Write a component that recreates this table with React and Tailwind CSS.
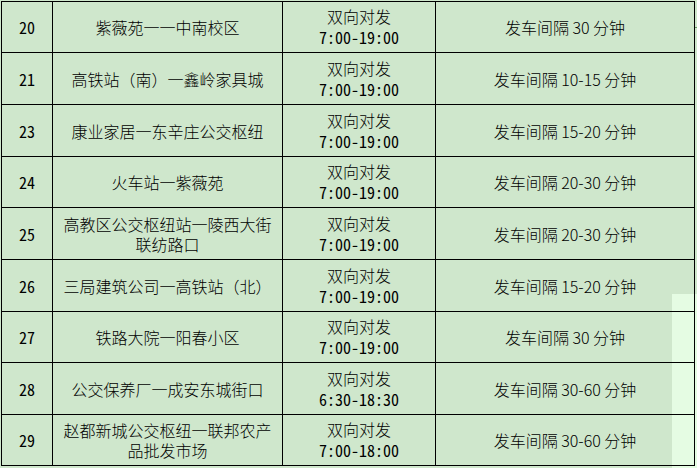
import React from "react";

const rows = [
  { no: "20", name: ["紫薇苑一一中南校区"], time: "7:00-19:00", gap: "发车间隔 30 分钟", h: "h-[51px]" },
  { no: "21", name: ["高铁站（南）一鑫岭家具城"], time: "7:00-19:00", gap: "发车间隔 10-15 分钟", h: "h-[52px]" },
  { no: "23", name: ["康业家居一东辛庄公交枢纽"], time: "7:00-19:00", gap: "发车间隔 15-20 分钟", h: "h-[52px]" },
  { no: "24", name: ["火车站一紫薇苑"], time: "7:00-19:00", gap: "发车间隔 20-30 分钟", h: "h-[51px]" },
  { no: "25", name: ["高教区公交枢纽站一陵西大街", "联纺路口"], time: "7:00-19:00", gap: "发车间隔 20-30 分钟", h: "h-[52px]" },
  { no: "26", name: ["三局建筑公司一高铁站（北）"], time: "7:00-19:00", gap: "发车间隔 15-20 分钟", h: "h-[52px]" },
  { no: "27", name: ["铁路大院一阳春小区"], time: "7:00-19:00", gap: "发车间隔 30 分钟", h: "h-[51px]" },
  { no: "28", name: ["公交保养厂一成安东城街口"], time: "6:30-18:30", gap: "发车间隔 30-60 分钟", h: "h-[52px]" },
  { no: "29", name: ["赵都新城公交枢纽一联邦农产", "品批发市场"], time: "7:00-18:00", gap: "发车间隔 30-60 分钟", h: "h-[51px]" },
];

const cjk = { fontFamily: '"Noto Sans CJK SC", sans-serif' };
const mono = { fontFamily: '"Noto Sans Mono CJK SC", "Noto Sans CJK SC", monospace' };

export default function App() {
  return (
    <div className="relative w-[697px] h-[468px] overflow-hidden bg-[#cfe7cc] text-black">
      <div className="absolute left-[672px] top-[294px] w-[25px] h-[174px] bg-[#e5fce3]" />
      <div className="absolute left-[695px] top-[27px] w-[2px] h-[1px] bg-[#6a9a66]" />
      <div className="relative ml-px mt-px w-[694px] border-l border-t border-black">
        {rows.map((r) => (
          <div key={r.no} className={`grid grid-cols-[51px_230px_153px_259px] ${r.h}`}>
            <div
              className="flex items-center justify-center border-r border-b border-black text-[16px] font-light"
              style={mono}
            >
              {r.no}
            </div>
            <div
              className="flex flex-col items-center justify-center border-r border-b border-black text-[16px] font-light leading-[20px]"
              style={cjk}
            >
              {r.name.map((t) => (
                <span key={t} className="whitespace-nowrap">{t}</span>
              ))}
            </div>
            <div className="flex flex-col items-center justify-center border-r border-b border-black text-[16px] font-light leading-[21px]">
              <span style={cjk}>双向对发</span>
              <span style={mono}>{r.time}</span>
            </div>
            <div
              className="flex items-center justify-center border-r border-b border-black text-[16px] font-light whitespace-nowrap"
              style={cjk}
            >
              {r.gap}
            </div>
          </div>
        ))}
      </div>
    </div>
  );
}
